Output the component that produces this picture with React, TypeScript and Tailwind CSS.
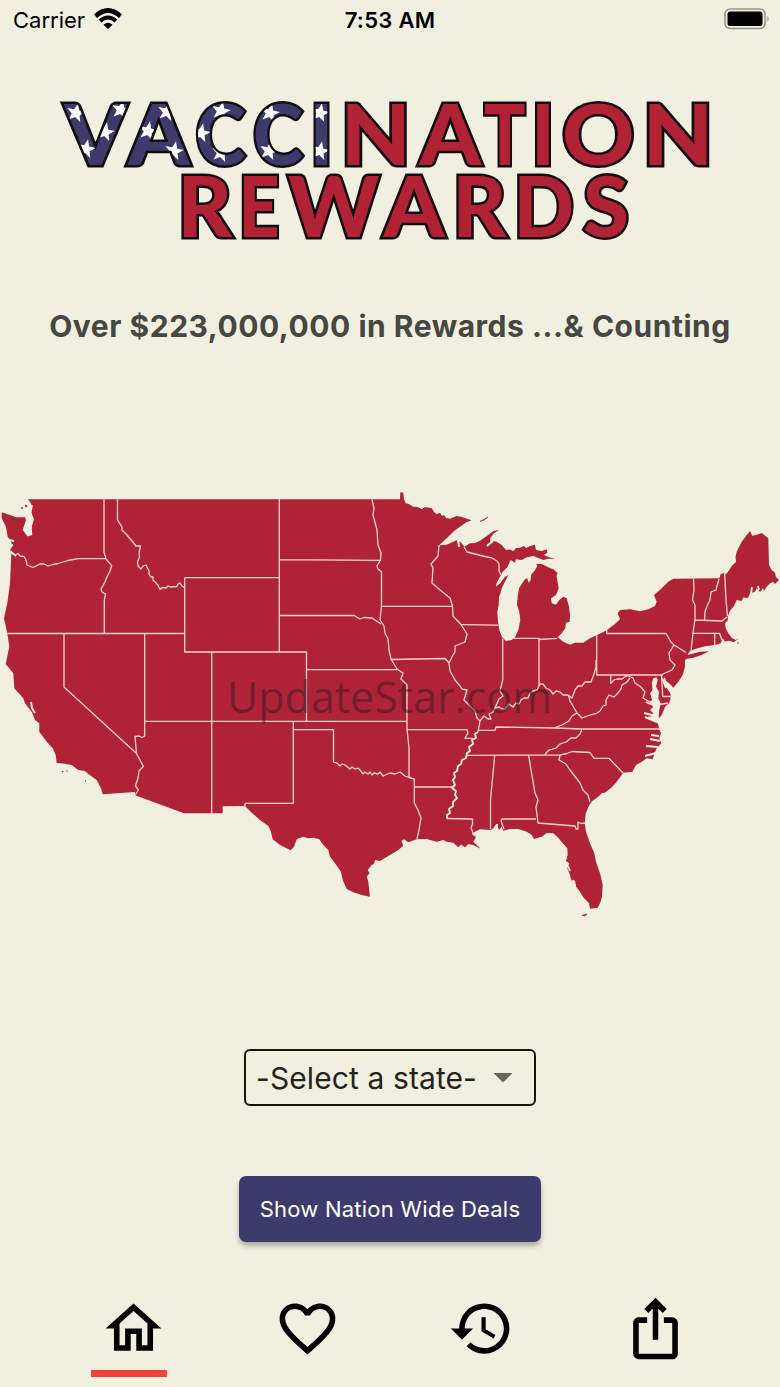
import * as React from "react";
import { MdFavoriteBorder, MdHistory, MdIosShare, MdOutlineHome } from "react-icons/md";

type Letter = { char: string; x: number; width: number };

const starLetters: Letter[] = [
  { char: "V", x: 64.5, width: 62 },
  { char: "A", x: 128, width: 61.5 },
  { char: "C", x: 195.5, width: 50 },
  { char: "C", x: 253, width: 50 },
  { char: "I", x: 310, width: 23 },
];

const redLetters: Letter[] = [
  { char: "N", x: 340.5, width: 70.5 },
  { char: "A", x: 419.5, width: 61.5 },
  { char: "T", x: 484, width: 41.5 },
  { char: "I", x: 531.5, width: 23 },
  { char: "O", x: 562, width: 72.5 },
  { char: "N", x: 642.5, width: 71 },
];

const rewardsLetters: Letter[] = [
  { char: "R", x: 177.5, width: 54.5 },
  { char: "E", x: 238.5, width: 41 },
  { char: "W", x: 288, width: 91.5 },
  { char: "A", x: 383.5, width: 61 },
  { char: "R", x: 452.5, width: 54 },
  { char: "D", x: 513.5, width: 60.5 },
  { char: "S", x: 583, width: 46 },
];

const stars = [
  [76, 113], [121, 110], [105, 132], [86, 149], [148, 131], [167, 112], [174, 151],
  [201, 133], [221, 111], [221, 153], [270, 113], [269, 151], [320, 113], [320, 151],
];

function Letters({ items, y }: { items: Letter[]; y: number }) {
  return (
    <>
      {items.map((l, i) => (
        <text key={i} x={l.x} y={y} textLength={l.width} lengthAdjust="spacingAndGlyphs">
          {l.char}
        </text>
      ))}
    </>
  );
}

function Logo() {
  return (
    <svg
      viewBox="50 90 680 160"
      className="w-[680px] h-[160px] font-['Lato',sans-serif] font-black text-[83px]"
      strokeMiterlimit="3"
    >
      <defs>
        <mask id="star-letters" maskUnits="userSpaceOnUse" x="50" y="90" width="300" height="90">
          <g fill="#fff">
            <Letters items={starLetters} y={164.5} />
          </g>
        </mask>
      </defs>
      <g fill="#3d3a6c" stroke="#120d10" strokeWidth="5" paintOrder="stroke">
        <Letters items={starLetters} y={164.5} />
      </g>
      <g mask="url(#star-letters)" fill="#fff">
        {stars.map(([x, y], i) => (
          <path
            key={i}
            transform={`translate(${x} ${y}) rotate(12)`}
            d="M0-10 2.5-3.2 9.5-3 4 1.4 6 8 0 4-6 8-4 1.4-9.5-3-2.5-3.2Z"
          />
        ))}
      </g>
      <g fill="#b12235" stroke="#120d10" strokeWidth="5" paintOrder="stroke">
        <Letters items={redLetters} y={164.5} />
        <Letters items={rewardsLetters} y={236.5} />
      </g>
    </svg>
  );
}

const land =
  "M28 499.3H400L400.3 492.3 403.3 492.7 404 499 405.7 503.3 409 504 413.3 506.7 418 507 421.7 509.3 424 507.5 426.7 507.3 431.7 508.3 434 512 436.7 514.3 440 512.7 442 516 444 515 446 518 450 518.7 453 517.5 456.7 516 461.7 517 471.7 520.3 466 522.5 460 526.7 454 531 448.3 536.7 439 545.3 446.7 544.7 453.3 541.7 456.7 540 458 544 460 541.3 464.3 546.7 470 543.3 475 543 480 540.7 488.3 535 493.3 531 499 530 494 533.3 490 538.3 490.7 542.7 493 541 496.7 541.7 501.7 545 506 550 510 549.5 513.3 551.2 516 548 520 547.7 524 546 526 548 530 546 535 544.7 536 550 541.7 551 546.7 549.3 547.3 552.7 544 555 548 557 555 559 548.3 558.7 543.3 560 538.3 558 533.3 556 526.7 557.3 521.7 560 516 559.3 515 562.7 510.7 560 507.3 567.3 502.7 571.7 500 576.7 496.7 582.7 495.7 586.7 500.7 582.7 505 576.7 508.3 575 505 581.7 501.7 588.3 500.5 593 499 596.7 498.7 605 497.3 611.7 498 621.7 499.3 630 502 637.3 506 641 511.7 640 515 637.3 518.3 630 520.3 620 519.3 611.7 517 605 517.7 596.7 519 588.3 521.7 584 525 579.3 527.3 578.3 528.7 582.7 530.7 580 531 575 535 570 537.3 566 536 564 541.7 564 548.3 567.3 553.3 569.3 557.7 573.3 556.5 576 557.3 580 558.7 588.3 556 595 551 598.3 551.7 603.3 556 604.7 559.3 600 563.3 596.7 566.7 598.3 569 606.7 570 615 569.7 621.7 566 622.7 565.3 628.3 561.7 633.3 557.7 637.3 563.3 641.7 570 644.7 575 642.7 583.3 642.7 590 638.3 596.7 635.3 606.7 630.3 615 624 620 619.3 617.7 613.3 620 610 630 609.3 640 611.3 648.3 609.3 655 606 656.7 601.7 654 595 661.7 588.3 668.3 581.7 673.3 578.7 719.3 578.3 720.7 574 723.3 573.3 726 574.3 729.3 570 731.7 566 736 561.7 735.5 557 736.7 551.7 741.7 541.7 746 536 750 531 752.3 535.7 756.7 534.7 761.7 533 768.3 538.3 769 565 771.7 570 775 572.7 776 577 779 580 775 584 773 582 770 583.3 766.7 586.7 764 591 763 588 760 592 756.7 588.3 755 591.7 750 593.3 749 596 747.3 598.3 743.3 597.3 741.7 601 736.7 600 734 606 730 610.7 727.7 616.7 728 620 725 623.3 725.7 628.3 728.3 633.3 731.7 637.7 735.7 640 739.3 638.3 734 642 728.3 640.7 725 641.7 722.7 638.3 720.7 643.3 715 645 705 646.3 695 649 689.3 651.7 687.5 655 700 651.7 709 651.3 701.7 655 693.3 657.7 686.7 658.7 685 660 685 666.7 682.7 675 678.3 681.7 673.3 687.7 671 685 666 680.7 664.7 676.7 663.3 680.7 666 686.7 670 692.7 671 696.7 669.3 702.7 665 706.7 661.7 715 658.3 719 659.3 710 660.7 703.3 658.3 698.3 659 691.7 656 686.7 657.7 680 656.7 677.3 653.3 678.3 651.7 683.3 652.7 690 650 693.3 652.3 700 649.3 701.7 653.3 706.7 650 710 653.3 713.3 652 716 646.7 717.3 655 721 658.3 724 659 729.3 661 733 659.3 738.3 661.3 743.3 656.7 748.3 654 755 652.7 759.3 646.7 758.3 641.7 761.7 636 765 632.3 771.7 623.3 772.7 616.7 781.7 611.7 787.3 605 792.7 602 793 598.3 796.7 592.3 801 589.3 805 585.7 813.3 584.7 823.3 586 831.7 590 843.3 594.3 853.3 596 861.7 600 873.3 602.7 885 602 896.7 600 903.3 597.7 907.7 590 908.7 589 903.3 583.3 897.3 580 891.7 576 886.7 575 880.7 571.7 880.7 569.3 873.3 567.3 868.3 569.3 863.3 566 861 567.7 855 567.3 848.3 562.7 843.3 558.3 837.7 553.3 833.3 546.7 833 541.7 836.7 534 839 531.7 835 526.7 831.7 518.3 829 510 829 503.3 830.7 501.5 826.5 499.3 830 496 824.3 493.3 828.3 490.7 830 480 829.3 475 831.7 471.7 834 476 837 473.3 841.7 481 849 473.3 845 468.3 844 465 847.3 461 844.5 458.3 847.3 453.3 842.7 446.7 841.7 443.3 840 436.7 841.7 426.7 839 416.7 839.3 408.3 842.3 404 839.3 401.5 841 403.3 845.7 398.3 850 390 855 380 861 375 860 374 864 371.7 865 367.7 870 369.5 873 366.7 876.7 368.3 881.7 370 896.7 361.7 895 353.3 892.3 346.7 889 342.7 880 341 871.7 335 863.3 330 856.7 328.3 850 323.3 845 319.3 839.3 313.3 837.7 308 838.2 303.3 836.7 296.7 839.3 294 846.7 290.7 850.3 280 845 272.7 839.3 271 831.7 268.3 826 260 820 251.7 812.7 245 806 222.7 806.3 222.7 813.3 184 813.3 135 795.3 135 792 102.7 794.3 101 788.3 96.7 780 88.3 774 85 771 78.3 770 71.7 765 63 763.5 56.7 763 55.7 755 52.7 748.3 46.7 741.7 39.3 731.7 39.3 723.3 35 720 31.7 711.7 25 703.3 23.3 698.3 14.3 688.3 13.3 673.3 5.7 664 9.3 646.7 7.3 633.3 4 618.3 7.3 603.3 10 583.3 11.3 555 10 550 12.5 546 11 541.7 7.7 536.7 6 526.7 1.7 518.3 1.7 512.3 10 515 16 517.2 25 517.3 26 520 22.7 530 25 533 27.5 536.5 32.3 535 31.7 526.7 34 519.3 31 511.7 31.5 507 31 503.3Z";

const borders = [
  // west
  "M104 499.3V552L106 559 111.7 565.7 110 571 107 577 105 582 101 589 102 592 105.5 594 104.3 600V633.5",
  "M11 553 15 555 18 553.5 20 556 24 556.5 26 560 27 565 33 567.5 40 564 44 564 48 566 53 564.5 58 563.5 68 560.5 78 558.7H106",
  "M117.5 499.3V520L122 527 122 530 127 535 132 541 136 546 140.5 546 139 553 139.5 557 137.5 562 138 566 141 569 143 566 146 565 149 571 149 574 151 577 153 577 153 580 156 583 158 585 160 589.5 162 587.5 166 588 168 586 170 587 177 586.5 178 584 180 583 182 586 184.7 588",
  "M184.7 577.7V652H306.5V721.3M184.7 577.7H279.3M7.3 633.5H184.7",
  "M64 633.5V687L136.5 753.5M144.7 633.5V736L142 737.5 139 736 135 736.5 136.5 753.5 140 760 143.3 766.5 139 771 138 778 135.5 786 138.5 790 135 795",
  "M211.7 652V813M144.7 721.3H407",
  // plains
  "M279.3 499.3V652M279.3 559.7 380.5 560.3M279.3 615.5H354L360 619 364 617.5 372 618 381 624M306.5 669.7H397",
  "M372 499.3 374 508 373 515 377 530 378 545 381 553 380.5 560 377 566 378 569 381.5 572V606L380 620 384 626 385 633 388 639 389 650 391 659 397 669 403 673 401 679 407 685V729L409 748V777",
  "M381.5 606.3H452M391 659.5 445 658.5 449 663M407 729.7H467L468 733 465 738.3H473M414.3 787H453",
  "M293.3 721.3V803.3H245V806M293.3 729.7H333.5V762L337 763 340 766 342 764 345 765 350 769 352 767 355 769 358 768 360 770 363 774 365 772 368 774 370 772 372 775 374 773 378 774 380 772 383 776 390 773 395 774 400 772 405 776 409 777.5 414.3 779V803L418 810 421 818 419 830 417 839",
  // Mississippi valley
  "M439 545 438 556 431 564 433 568 432 583 440 590 450 598 452.5 606 453 616 461 624.5 467 634 465 642 455 646 455 652 453 655 449 663 450 671 455 680 460 686 462 689 467 690 464 700 468 704 475 711 477 718 480 721 478 732",
  "M461 624.7 498 625.2M464 547 467 552 475 554 485 556.5 492 558 497 561 499 564 499 571 501 575",
  "M502.7 639V680L500 691 503 696 499 699 495 708M539 638.5V686M512 638.3H539V639.5L557 638.3",
  "M480 721 484 716 488 719 491 719 489 714 493 712 495 708 499 707 502 709 505 709 509 704 513 707 516 703 519 704 521 700 524 698 528 698 530 693 533 691 537 690 540 684 543 684 546 688 550 690 553 694 556 691 560 692 563 695 568 695 572 698 575 690 578 686 582 686 585 682 591 682 594 674 596 667 596 660",
  // east
  "M596.7 635.5V675H663M606.7 630V633.5H666L671 642 674 645 686 652.5M674 645 669 653 670 660 675 665 672 670 663 674 661.5 676 662.7 696.5H671M660 704.5 668 703",
  "M693.5 578.5 694 590 692.5 600 695 605 695 619 693 633 691 651M719 579 717 586 716 590 711 592 710 600 707 606 705 612 704.5 620.5M694.7 620 722 621 727 617M724.7 574 726 600 727.5 616M692 633.3H719.5L722 640M714.7 634V645",
  "M610.7 675V683.5L614 680 617 679 622 679 627 675.5 633 678 635 683 641 687 645 692 643 698 650 702",
  "M568.5 695 570 701 573 706 577 713 582 718 590 715 597 713 600 711 603 706 606 705 606 700 609 695 614 697 617 694 621 689 622 685 627 682 630 678M577 713 572 716 569 721 562 725 555 727.7",
  "M478 730.3H495L496 727 555 728 582 729H660M582 729 580 734 576 738 571 738 566 742 560 744 556 748 549 750 546 753 545 755",
  "M467 755.3 560 755 567 753.5 572 751.5 590 752.5 594 758.3H609L623 773M560 755 559 760 566 764 570 770 580 783 583 790 588 795 590 802",
  "M494.7 755 490.5 800V829M528.5 755 535 793 538 800 536 807 538 823 575 826 576 829 578 829 578 822 581 823.5 585 823M536 819H502L501 821 504 829",
  "M447 818.5 472.5 819 472.5 824 471 828 474 835",
];

const rivers =
  "M478 732 475 734 476 738 472 740 473 744 469 747 470 751 467 753 466 758 462 760 461 764 458 766 457 771 454 773 455 777 453 780 455 785 452 788 456 791 455 795 457 798 453 802 453 806 449 809 450 813 447 815 447 818.5";

const inlets =
  "M26 509 31 515 29 524 25 531M32 505 29 519 31 529M9 540 14 541M10 551 16 556M9 546 13 545M31 702 32 708 35 713M659 736 651 735M660 741 650 739M658 747 646 746M656 753 645 756M655 683 652 696 656 710 659 724M657 707 646 702M656 716 644 713M657 722 645 717M662 678 666 688M497 824 497 830M487 546 493 541M458 537 459 547M568 866 570 871M573 880 575 886M752 587 751 594M758 586 759 590";

function StatesMap() {
  return (
    <svg viewBox="0 480 780 450" className="w-full h-[450px]" fill="none" strokeLinejoin="round">
      <path d={land} fill="#b02235" />
      <path d="M480 521.5 485 519 488 517 484 520ZM582 915.5 587 914 585 916Z" fill="#b02235" stroke="#b02235" strokeWidth="0.7" />
      <g fill="#b02235">
        <circle cx="22" cy="508" r="1" />
        <circle cx="26" cy="506" r="1.2" />
        <circle cx="62.5" cy="771.5" r="0.8" />
        <circle cx="67" cy="771" r="0.7" />
        <circle cx="85.5" cy="781" r="0.7" />
        <circle cx="738" cy="643" r="0.8" />
      </g>
      <g stroke="#f9d6cb" strokeWidth="1.3">
        {borders.map((d) => (
          <path key={d} d={d} />
        ))}
      </g>
      <path d={rivers} stroke="#fbe9dc" strokeWidth="1.9" />
      <path d={inlets} stroke="#f7f0e2" strokeWidth="1.9" />
      <text
        x="227"
        y="712.5"
        textLength="325"
        lengthAdjust="spacingAndGlyphs"
        className="font-['Open_Sans','Noto_Sans',sans-serif] text-[44px]"
        fill="#261d22"
        fillOpacity="0.48"
      >
        UpdateStar.com
      </text>
    </svg>
  );
}

function StatusBar() {
  return (
    <header className="grid grid-cols-3 items-center h-10 pl-[13px] pr-[10px] text-[22px] text-black">
      <div className="flex items-center gap-[9px]">
        <span>Carrier</span>
        <svg viewBox="0 0 28 21" className="w-7 h-[21px] -mt-1" fill="none" stroke="#000" strokeWidth="4.6">
          <path d="M1.5 8.2Q14-3.2 26.5 8.2" />
          <path d="M6 13Q14 6 22 13" strokeWidth="4" />
          <path d="M9.5 16.8Q14 12.5 18.5 16.8L14 21Z" fill="#000" stroke="none" />
        </svg>
      </div>
      <span className="text-center font-semibold tracking-[0.3px] -ml-[3px]">7:53 AM</span>
      <svg viewBox="0 0 46 22" className="w-[46px] h-[22px] justify-self-end -mt-0.5">
        <rect x="1" y="1" width="40" height="19.5" rx="5" fill="none" stroke="#989689" strokeWidth="1.6" />
        <rect x="3.5" y="3.5" width="35" height="14.5" rx="2.5" fill="#000" />
        <path d="M43.3 7.5Q46 10.8 43.3 14Z" fill="#989689" />
      </svg>
    </header>
  );
}

const tabs = [
  { name: "home", icon: MdOutlineHome },
  { name: "favorites", icon: MdFavoriteBorder },
  { name: "history", icon: MdHistory },
  { name: "share", icon: MdIosShare },
];

export default function App() {
  const [active, setActive] = React.useState("home");

  return (
    <div className="flex flex-col items-center w-[780px] h-[1387px] overflow-hidden bg-[#f1efe0] font-['Inter','Liberation_Sans',sans-serif]">
      <div className="w-full">
        <StatusBar />
      </div>
      <h1 className="mt-[50px]" aria-label="Vaccination Rewards">
        <Logo />
      </h1>
      <p className="mt-14 h-10 leading-10 text-[30px] font-bold tracking-[0.52px] whitespace-nowrap text-[#464740]">
        Over $223,000,000 in Rewards ...&amp; Counting
      </p>
      <main className="w-full mt-[134px]">
        <StatesMap />
      </main>
      <button className="flex items-center gap-4 w-[292px] h-[57px] mt-[119px] pl-[10px] pt-px border-2 border-[#15140f] rounded-md text-[30px] tracking-[0.1px] text-[#25241c] whitespace-nowrap">
        -Select a state-
        <svg viewBox="0 0 20 10" className="w-5 h-2.5 shrink-0">
          <path d="M0.5 0H19.5L10 9.5Z" fill="#66665c" />
        </svg>
      </button>
      <button className="w-[302px] h-[66px] mt-[70px] rounded-[7px] bg-[#3d3a6c] text-[22px] tracking-[0.22px] text-white whitespace-nowrap shadow-[0_4px_5px_rgba(0,0,0,0.28)]">
        Show Nation Wide Deals
      </button>
      <nav className="grid grid-cols-4 w-[696px] mt-[53px] ml-2">
        {tabs.map((tab) => (
          <button
            key={tab.name}
            aria-label={tab.name}
            onClick={() => setActive(tab.name)}
            className="flex flex-col items-center gap-2 text-black"
          >
            <tab.icon className="size-[67px]" />
            {active === tab.name && <span className="w-[76px] h-[7px] mr-2 bg-[#f44336]" />}
          </button>
        ))}
      </nav>
    </div>
  );
}
